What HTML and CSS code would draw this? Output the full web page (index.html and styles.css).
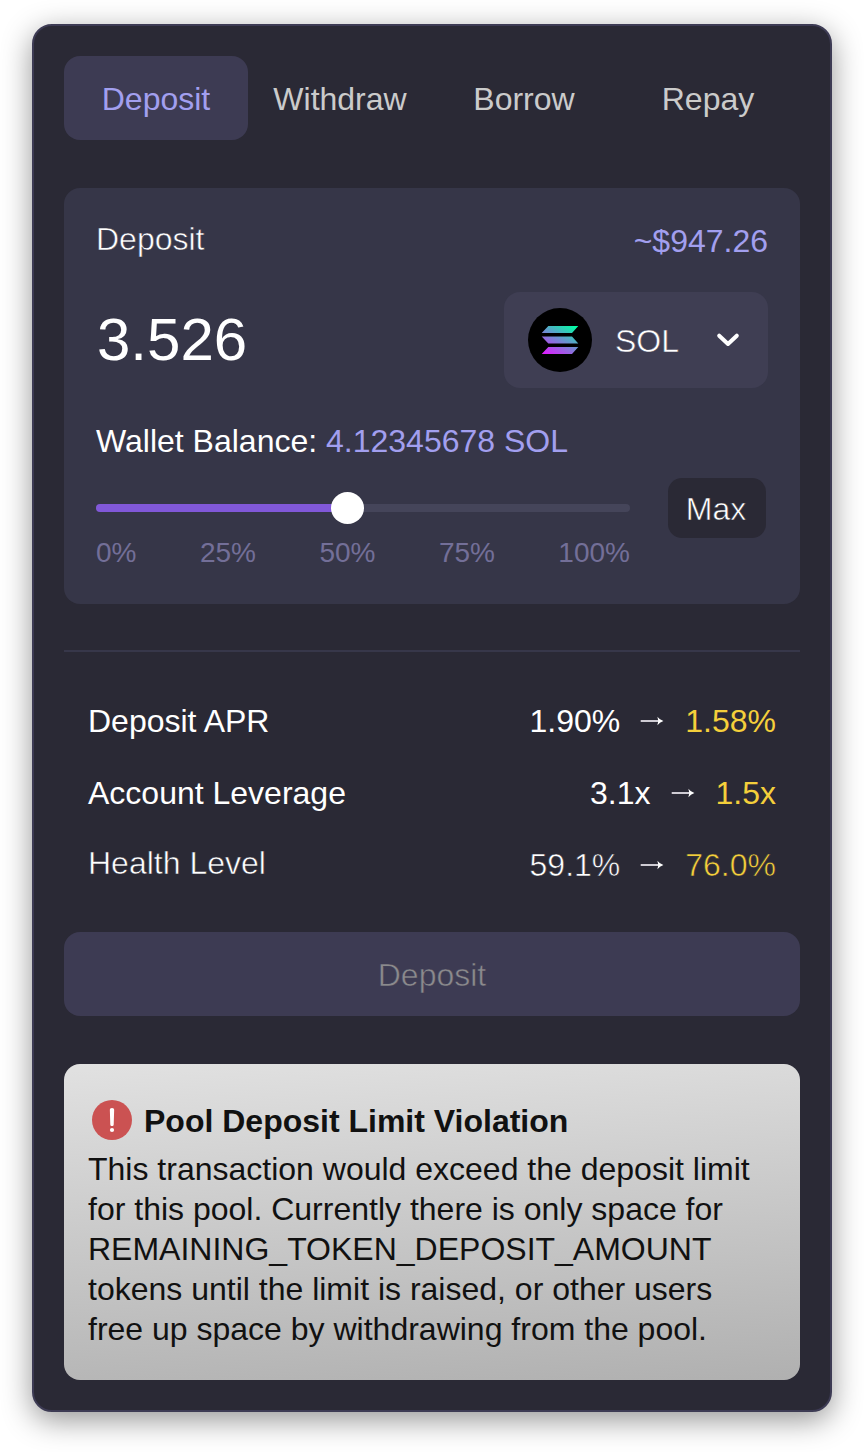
FILE: index.html
```html
<!DOCTYPE html>
<html lang="en">
<head>
<meta charset="utf-8">
<title>Deposit</title>
<link rel="stylesheet" href="styles.css">
</head>
<body>
<main class="card">
  <nav class="tabs">
    <button class="tab tab-active">Deposit</button>
    <button class="tab">Withdraw</button>
    <button class="tab">Borrow</button>
    <button class="tab">Repay</button>
  </nav>

  <section class="panel">
    <div class="panel-head">
      <span class="light">Deposit</span>
      <span class="usd">~$947.26</span>
    </div>
    <div class="amount-row">
      <span class="amount">3.526</span>
      <button class="token">
        <svg class="token-logo" viewBox="0 0 64 64">
          <defs>
            <linearGradient id="sol" gradientUnits="userSpaceOnUse" x1="22" y1="51" x2="42" y2="13">
              <stop offset="0.06" stop-color="#dc1fff"/>
              <stop offset="0.5" stop-color="#718bd2"/>
              <stop offset="0.95" stop-color="#00ffa3"/>
            </linearGradient>
          </defs>
          <circle cx="32" cy="32" r="32" fill="#000"/>
          <path fill="url(#sol)" d="M20.300 18H50.300L44 25H13.700ZM13.700 28.500H44L50.300 35.500H20.300ZM20.300 39H50.300L44 46H13.700Z"/>
        </svg>
        <span class="light token-name">SOL</span>
        <svg class="chevron" viewBox="0 0 24 16"><path d="M3.200 3.700L12 12L20.800 3.700"/></svg>
      </button>
    </div>
    <p class="balance">Wallet Balance: <span class="accent">4.12345678 SOL</span></p>
    <div class="slider-row">
      <div class="slider">
        <div class="track"><div class="fill"></div><div class="thumb"></div></div>
        <div class="marks"><span>0%</span><span>25%</span><span>50%</span><span>75%</span><span>100%</span></div>
      </div>
      <button class="max light">Max</button>
    </div>
  </section>

  <hr class="divider">

  <section class="stats">
    <div class="stat">
      <span>Deposit APR</span>
      <span class="change"><span>1.90%</span><svg class="arrow" viewBox="0 0 24 12"><path d="M.7 6H19"/><path class="head" d="M17.400 1.700Q19.600 4.800 23.400 6Q19.600 7.200 17.400 10.300L18.300 6Z"/></svg><span class="new">1.58%</span></span>
    </div>
    <div class="stat">
      <span>Account Leverage</span>
      <span class="change"><span>3.1x</span><svg class="arrow" viewBox="0 0 24 12"><path d="M.7 6H19"/><path class="head" d="M17.400 1.700Q19.600 4.800 23.400 6Q19.600 7.200 17.400 10.300L18.300 6Z"/></svg><span class="new">1.5x</span></span>
    </div>
    <div class="stat stat-health light">
      <span class="health-label">Health Level</span>
      <span class="change"><span>59.1%</span><svg class="arrow" viewBox="0 0 24 12"><path d="M.7 6H19"/><path class="head" d="M17.400 1.700Q19.600 4.800 23.400 6Q19.600 7.200 17.400 10.300L18.300 6Z"/></svg><span class="new">76.0%</span></span>
    </div>
  </section>

  <button class="submit light" disabled>Deposit</button>

  <section class="alert">
    <h2 class="alert-title">
      <svg class="alert-icon" viewBox="0 0 40 40">
        <circle cx="20" cy="20" r="20" fill="#cb5252"/>
        <path d="M20 8C21.500 8 22.200 8.900 22.150 10.100L21.700 24.500C21.650 25.500 21 26.100 20 26.100S18.350 25.500 18.300 24.500L17.850 10.100C17.800 8.900 18.500 8 20 8Z" fill="#fff"/>
        <circle cx="20" cy="30" r="2.100" fill="#fff"/>
      </svg>
      <span>Pool Deposit Limit Violation</span>
    </h2>
    <p class="alert-text">This transaction would exceed the deposit limit for this pool. Currently there is only space for REMAINING_TOKEN_DEPOSIT_AMOUNT tokens until the limit is raised, or other users free up space by withdrawing from the pool.</p>
  </section>
</main>
</body>
</html>
```
FILE: styles.css
```css
* { box-sizing: border-box; margin: 0; padding: 0; }

body {
  padding: 24px 32px 40px;
  background: #fff;
  color: #fff;
  font: 32px/40px "Liberation Sans", Arial, sans-serif;
}

button { border: 0; color: inherit; font: inherit; background: none; }
svg { display: block; flex: none; }

.card {
  height: 1388px;
  padding: 30px;
  background: #2a2935;
  border: 2px solid #3d3b54;
  border-radius: 20px;
  box-shadow: 0 8px 30px rgba(0, 0, 0, .42);
}

/* Light weight: the outline takes the surface colour and thins the strokes. */
.light { --surface: #363648; -webkit-text-stroke: .55px var(--surface); }

.tabs { display: grid; grid-template-columns: repeat(4, 1fr); }
.tab { height: 84px; padding-top: 1px; border-radius: 16px; color: #cbcbcb; }
.tab-active { background: #3d3b53; color: #a29fef; }

.panel {
  height: 416px;
  margin-top: 48px;
  padding: 31px 32px 32px;
  border-radius: 16px;
  background: #363648;
}
.panel-head { display: flex; justify-content: space-between; height: 73px; }
.usd { padding-top: 2px; color: #a29fef; }
.amount-row { display: flex; justify-content: space-between; align-items: center; }
.amount { padding-left: 1px; font-size: 60px; line-height: 96px; }
.token {
  display: flex;
  align-items: center;
  width: 264px;
  height: 96px;
  padding: 0 28px 0 24px;
  border-radius: 16px;
  background: #3f3e53;
}
.token-logo { width: 64px; height: 64px; }
.token-name { --surface: #3f3e53; margin-left: 23px; padding-top: 2px; }
.chevron { width: 24px; height: 16px; margin-left: auto; }
.chevron path { fill: none; stroke: #fff; stroke-width: 4; stroke-linecap: round; stroke-linejoin: round; }

.balance { margin-top: 33px; white-space: nowrap; }
.accent { color: #a29fef; }
.slider-row { display: flex; justify-content: space-between; align-items: flex-start; padding: 17px 2px 0 0; }
.slider { width: 534px; padding-top: 26px; }
.track { position: relative; height: 8px; border-radius: 4px; background: #45455a; }
.fill { width: 251px; height: 8px; border-radius: 4px; background: #8158d9; }
.thumb { position: absolute; left: 235px; top: -12px; width: 33px; height: 32px; border-radius: 50%; background: #fff; }
.marks { display: flex; justify-content: space-between; margin-top: 21px; color: #736f98; font-size: 28px; }
.max { --surface: #2a2935; width: 98px; height: 60px; padding: 2px 2px 0 0; border-radius: 14px; background: #2a2935; }

.divider { height: 2px; margin-top: 46px; border: 0; background: #37374a; }

.stats { display: grid; gap: 32px; padding: 49px 24px 0; }
.stat { display: flex; justify-content: space-between; }
.stat-health { --surface: #2a2935; }
.health-label { margin-top: -2px; }
.change { display: flex; align-items: center; }
.arrow { width: 24px; height: 12px; margin: 0 21px 0 20px; }
.arrow path { fill: none; stroke: #cfccd4; stroke-width: 2; }
.arrow .head { fill: #fff; stroke: none; }
.new { color: #f4cf3b; }

.submit {
  --surface: #3d3b53;
  width: 100%;
  height: 84px;
  margin-top: 47px;
  padding-top: 2px;
  border-radius: 16px;
  background: #3d3b53;
  color: #8b8a8d;
  display: block;
}

.alert {
  height: 316px;
  margin-top: 48px;
  padding: 36px 24px 0;
  border-radius: 16px;
  background: linear-gradient(176deg, #e1e1e1, #b0b0b0);
  color: #111;
}
.alert-title { display: flex; gap: 12px; height: 49px; padding-left: 4px; font-size: 32px; line-height: 42px; white-space: nowrap; }
.alert-icon { width: 40px; height: 40px; }
```
